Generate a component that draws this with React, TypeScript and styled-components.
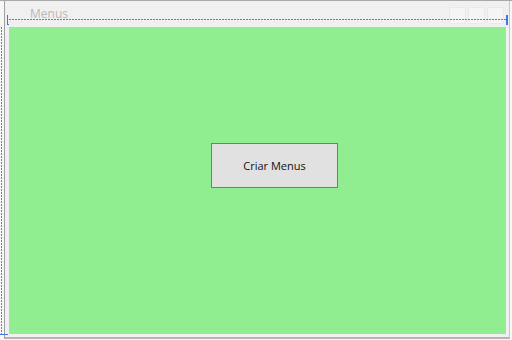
import React from 'react'
import styled, { createGlobalStyle } from 'styled-components'

const GlobalStyle = createGlobalStyle`
  html, body {
    margin: 0;
    padding: 0;
    background: #f7f7f7;
  }
  #root {
    width: 512px;
    height: 340px;
  }
`

const Surface = styled.div`
  position: relative;
  width: 512px;
  height: 340px;
  box-sizing: border-box;
  padding-left: 4px;
  border-top: 1px solid #a9a9a9;
  background: #f7f7f7;
  overflow: hidden;
`

const Window = styled.div`
  display: flex;
  flex-direction: column;
  width: 506px;
  height: 338px;
  box-sizing: border-box;
  border-left: 1px solid #a0a0a0;
  border-right: 1px solid #c8c8c8;
  border-bottom: 2px solid #b4b4b4;
  background: #f0f0f0;
  padding: 0 3px 3px 4px;
`

const TitleBar = styled.div`
  position: relative;
  display: flex;
  align-items: flex-start;
  height: 26px;
  padding: 5px 2px 0 21px;
  box-sizing: border-box;
`

const Title = styled.span`
  flex: 1;
  font-family: 'Open Sans', 'Liberation Sans', sans-serif;
  font-size: 12px;
  line-height: 16px;
  color: #b8b8b8;
`

const TitleButtons = styled.div`
  display: flex;
  gap: 2px;
  margin-top: 1px;
`

const TitleButton = styled.div`
  width: 17px;
  height: 17px;
  border-radius: 2px;
  background: #f5f5f5;
  border: 1px solid #eaeaea;
  box-sizing: border-box;
`

const Client = styled.div`
  flex: 1;
  display: flex;
  align-items: flex-start;
  justify-content: flex-start;
  background: #90ee90;
  padding: 116px 0 0 202px;
`

const ActionButton = styled.button`
  width: 127px;
  height: 45px;
  padding: 0;
  background: #e1e1e1;
  border: 1px solid #7a7a7a;
  border-radius: 0;
  font-family: 'Open Sans', 'Liberation Sans', sans-serif;
  font-size: 11px;
  color: #111;
  cursor: pointer;
`

/* designer selection adornments */
const DottedH = styled.div`
  position: absolute;
  left: 9px;
  top: 18px;
  width: 497px;
  height: 1px;
  background: repeating-linear-gradient(to right, #4a80e8 0 2px, transparent 2px 3px);
`

const DottedV = styled.div`
  position: absolute;
  left: 1px;
  top: 26px;
  width: 1px;
  height: 307px;
  background: repeating-linear-gradient(to bottom, #4a80e8 0 2px, transparent 2px 3px);
`

const Grip = styled.div<{ $left: number; $top: number; $w: number; $h: number }>`
  position: absolute;
  left: ${({ $left }) => $left}px;
  top: ${({ $top }) => $top}px;
  width: ${({ $w }) => $w}px;
  height: ${({ $h }) => $h}px;
  background: #3f78e6;
`

export default function App() {
  return (
    <>
      <GlobalStyle />
      <Surface>
        <Window>
          <TitleBar>
            <Title>Menus</Title>
            <TitleButtons>
              <TitleButton />
              <TitleButton />
              <TitleButton />
            </TitleButtons>
          </TitleBar>
          <Client>
            <ActionButton>Criar Menus</ActionButton>
          </Client>
        </Window>
        <DottedH />
        <DottedV />
        <Grip $left={7} $top={14} $w={1} $h={10} />
        <Grip $left={7} $top={23} $w={2} $h={1} />
        <Grip $left={506} $top={14} $w={2} $h={10} />
        <Grip $left={0} $top={333} $w={8} $h={1} />
      </Surface>
    </>
  )
}
